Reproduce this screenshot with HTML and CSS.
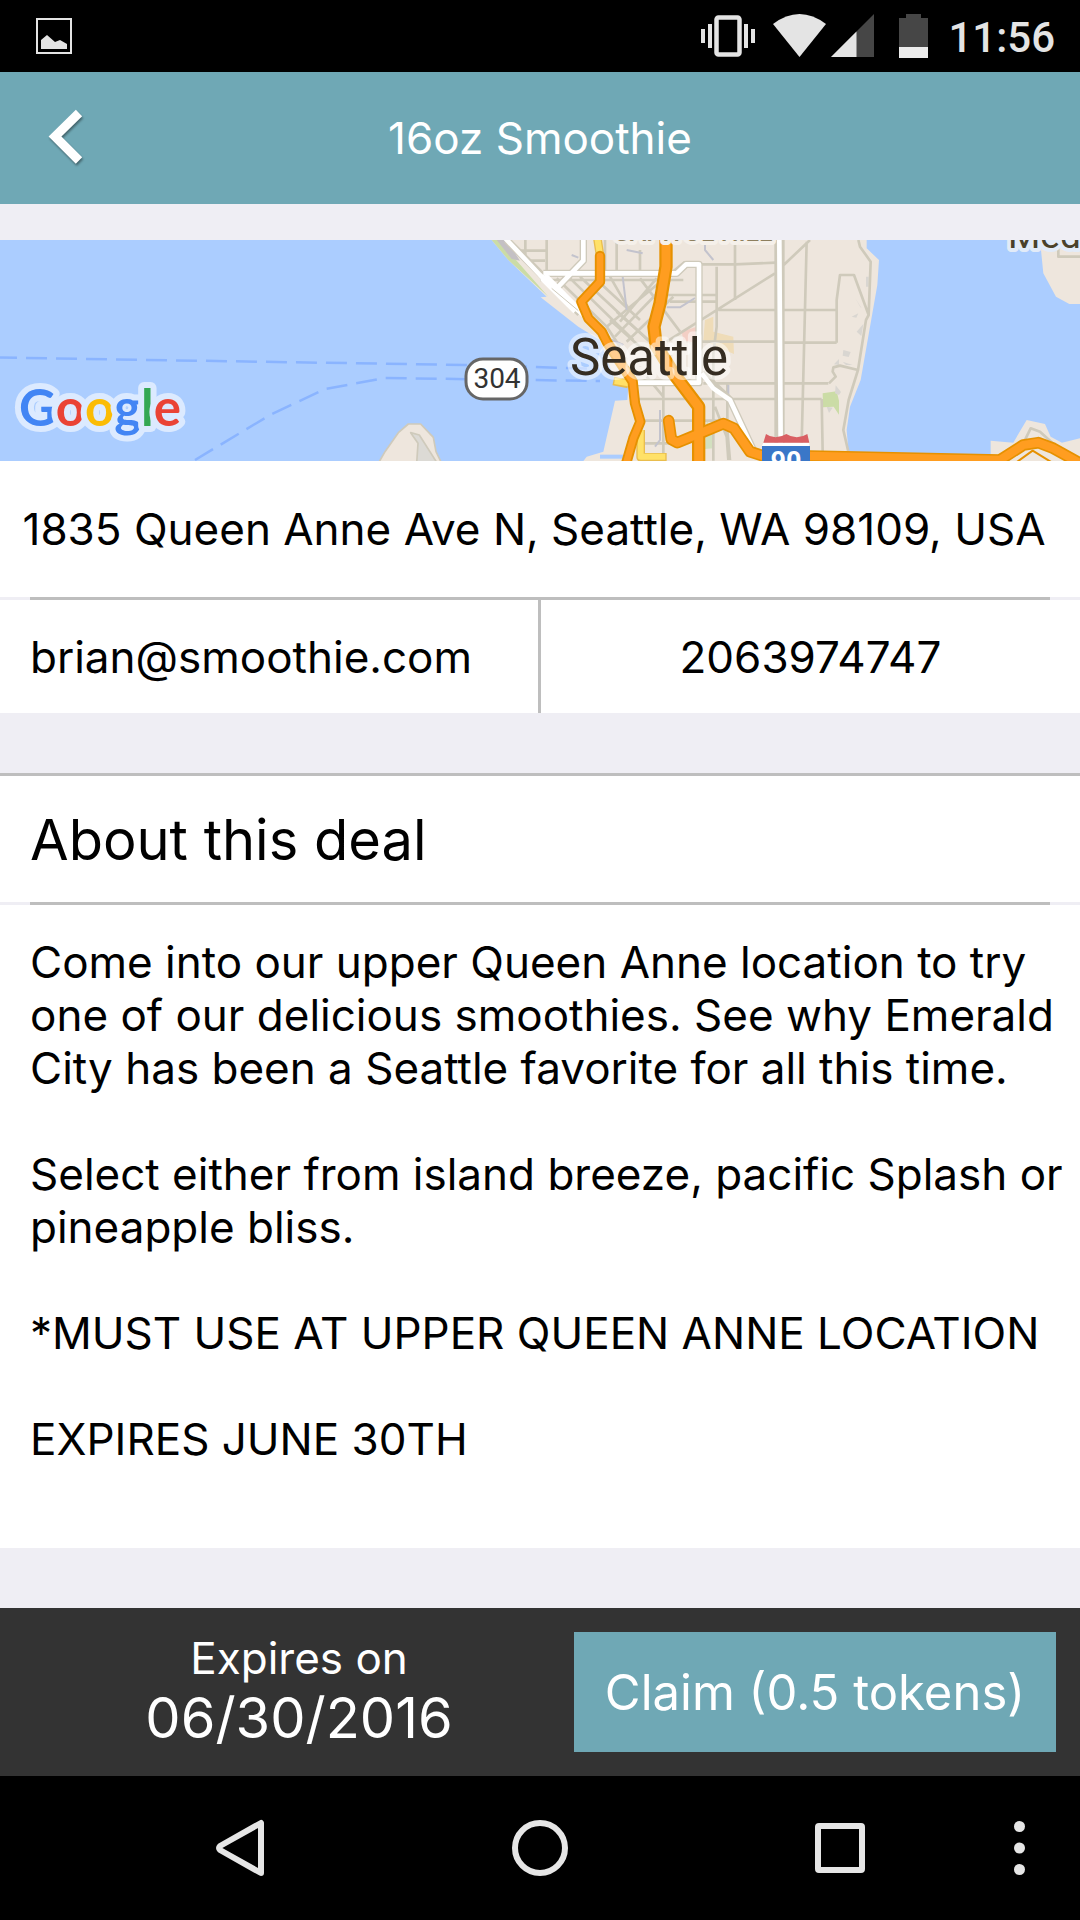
FILE: index.html
```html
<!DOCTYPE html>
<html lang="en">
<head>
<meta charset="utf-8">
<meta name="viewport" content="width=device-width, initial-scale=1">
<title>16oz Smoothie</title>
<link rel="stylesheet" href="styles.css">
</head>
<body>
<div class="screen">
  <div class="status">
    <svg class="status-note" width="36" height="36" viewBox="0 0 36 36" aria-hidden="true">
      <rect x="1" y="1" width="34" height="34" fill="none" stroke="#e4e4e4" stroke-width="2"/>
      <path d="M5 31V22l6-5 8 7 5-2 7 4v5z" fill="#e4e4e4"/>
    </svg>
    <div class="status-icons">
      <svg width="54" height="44" viewBox="0 0 54 44" fill="#e4e4e4" aria-hidden="true">
        <rect x="15.500" y="3.500" width="23" height="37" rx="2" fill="none" stroke="#e4e4e4" stroke-width="4.500"/>
        <path d="M0 15h4v14H0zM7 10h4v24H7zM43 10h4v24h-4zM50 15h4v14h-4z"/>
      </svg>
      <svg class="wifi" width="53" height="44" viewBox="0 0 53 44" aria-hidden="true">
        <path d="M0 10Q26.500-10 53 10L26.500 43z" fill="#e4e4e4"/>
      </svg>
      <svg class="signal" width="43" height="44" viewBox="0 0 43 44" aria-hidden="true">
        <path d="M0 43L43 0v43z" fill="#464646"/>
        <path d="M0 43L25.500 17.500V43z" fill="#e4e4e4"/>
      </svg>
      <svg class="battery" width="29" height="44" viewBox="0 0 29 44" aria-hidden="true">
        <path d="M0 4h7V0h15v4h7v30H0z" fill="#464646"/>
        <path d="M0 33h29v11H0z" fill="#ececec"/>
      </svg>
      <time class="clock">11:56</time>
    </div>
  </div>

  <header class="bar">
    <button class="bar-back" type="button" aria-label="Back">
      <svg width="60" height="72" viewBox="0 0 60 72" aria-hidden="true">
        <path d="M43 11L19 34.500l24 24" fill="none" stroke="#fff" stroke-width="9"/>
      </svg>
    </button>
    <h1 class="bar-title">16oz Smoothie</h1>
  </header>

  <main class="content">
    <section class="card">
      <svg class="map" viewBox="0 0 1080 221" preserveAspectRatio="xMidYMid slice" role="img" aria-label="Map of Seattle">
        <rect width="1080" height="221" fill="#abcdff"/>
        <g fill="none" stroke="#8ab4ff" stroke-width="2.500">
          <path d="M-4 117.500L465 125 600 129" stroke-dasharray="21 9"/>
          <path d="M195 220L270 175 325 149 385 138 600 141" stroke-dasharray="21 9"/>
        </g>
        <g transform="translate(440 -10) scale(.33333)" stroke-linejoin="round">
          <!-- land -->
          <g fill="#eee6dd">
            <path d="M155 30L205 90 320 200 302 202 415 290 480 330 520 440 565 470 562 510 525 512 490 665 440 680 425 700H1228L1220 600 1230 530 1262 450 1312 165 1317 90 1280 55V30z"/>
            <path d="M1800 30L1810 130 1848 200 1888 222H1930V30zM1652 700V632L1720 638 1760 570 1815 582 1832 620 1866 638 1930 622V700z"/>
            <path d="M-185 700L-165 665-125 608-95 582H-58L-20 622-12 665 5 700z" stroke="#cfcabb" stroke-width="5"/>
            <path d="M-70 700L-66 640-88 608-62 615-8 700" fill="#dcdad5" stroke="#cfcabb" stroke-width="5"/>
          </g>
          <path d="M155 30L205 90 325 200 215 75 180 30z" fill="#cbdca6"/>
          <path d="M170 30h30l40 62-25-5z" fill="#c4c0c4"/>
          <path d="M820 260V305L880 320 882 372 830 350 790 330 795 270z" fill="#efdcb8"/>
          <path d="M725 305l45-15v50l-40-10z" fill="#f3cfc5"/>
          <path d="M800 570l20 40v45l-25 2z" fill="#d2e0bf"/>
          <path d="M1148 490l42-6 7 28v42l-16-24-32 2z" fill="#cbdca6"/>
          <path d="M480 674h70v12h-70z" fill="#abcdff"/>
          <path d="M1278 140h8v30h-8zM1245 203l20 32-4-4zM1235 260l20-10-6 13zM1250 305l20-23-6 36zM1210 360l22 6-6 15-18-4zM1182 403l15-16v18zM1208 395l30 10-20 0zM1187 466l16 20-6 9-12-5zM1160 530l18 3-11 16z" fill="#d9d6d1"/>
          <!-- minor streets -->
          <g fill="none" stroke="#cfcabb" stroke-width="8">
            <path d="M256 30v62M320 30v100M240 62h82M495 30v100M530 30v90M600 60v75M885 30v180M250 92h65"/>
            <path d="M300 150h430M350 145L500 290 540 350M385 140L580 330M420 140L640 345M465 145L600 270M510 140L565 235"/>
            <path d="M735 95L565 235 500 290M650 145L540 275M690 150L525 320M700 200L560 335M600 145L720 305M510 270L600 350M530 245L625 330"/>
            <path d="M780 103H885L1007 98M680 195H830M690 215H830M830 110V290L820 370V692M680 335L1005 130M780 335H1005M835 240H1190M1190 338H1030M790 460H1165M590 507H1145M670 460V692M595 572H860M610 640H700M620 440L670 500M862 460V600L870 690M825 530L860 620 865 690"/>
            <path d="M1007 30V640M1030 30V640M1100 35L1085 640M1028 108L1110 30M1190 338V210L1200 135H1242L1286 255M1255 30L1260 50 1292 95 1286 255 1278 270 1254 420 1226 510 1210 600 1225 665M1254 420L1200 407 1180 412 1178 425 1187 440 1167 460M1145 507L1148 665M1855 30V80H1930M1750 640L1772 595 1800 605 1850 650"/>
          </g>
          <path d="M548 140L560 240M795 35V60L820 90M560 60l48 10M680 232h40l45-28M395 75l20 8M470 310l80 35M660 540v90l-15 20M865 465v35" fill="none" stroke="#c3c3cd" stroke-width="6"/>
          <!-- main roads -->
          <g fill="none" stroke="#cfcabb" stroke-width="22">
            <path d="M200 30L300 130 420 250M310 130H710L738 103H777V458H590M430 30V92L350 175M1018 30L1020 640M785 430L870 510 940 660"/>
          </g>
          <g fill="none" stroke="#fff" stroke-width="14">
            <path d="M195 24L300 135 345 180 430 255M310 130H710L738 103H777V458H590M430 30V92L350 175M1018 30L1022 640M785 430L820 475 870 510 940 660"/>
          </g>
          <path d="M310 140L410 240" stroke="#fff" stroke-width="28"/>
          <path d="M335 175L415 242" stroke="#cfcabb" stroke-width="3"/>
          <g fill="none">
            <path d="M472 24L480 75M520 453L565 462M602 600V682H680" stroke="#e9bd4e" stroke-width="26"/>
            <path d="M472 24L480 75M524 453L565 460M602 600V680H676" stroke="#ffe168" stroke-width="18"/>
          </g>
          <!-- highways -->
          <g fill="none" stroke-linecap="round">
            <g stroke="#e69100">
              <path d="M480 78V155L424 215 445 265 485 305 500 335 578 455 585 520 601 575 580 625 557 705" stroke-width="31"/>
              <path d="M678 20V110L660 220 642 290 648 345 700 430 776 530V710" stroke-width="40"/>
              <path d="M686 572L694 628 712 638 775 612 850 581 882 595 930 665 970 678H1110L1680 690 1750 645 1795 638 1840 655 1930 705" stroke-width="35"/>
            </g>
            <g stroke="#ff9d20">
              <path d="M480 78V155L424 215 445 265 485 305 500 335 578 455 585 520 601 575 580 625 557 705" stroke-width="20"/>
              <path d="M678 20V110L660 220 642 290 648 345 700 430 776 530V710" stroke-width="27"/>
              <path d="M686 572L694 628 712 638 775 612 850 581 882 595 930 665 970 678H1110L1680 690 1750 645 1795 638 1840 655 1930 705" stroke-width="25"/>
            </g>
          </g>
          <path d="M1725 700L1778 662 1840 700z" fill="#eee6dd" stroke="#e69100" stroke-width="6"/>
          <!-- interstate shield -->
          <path d="M966 648H1110V700H966z" fill="#3a77c8"/>
          <path d="M970 638H1108V648H966z" fill="#fff"/>
          <path d="M970 638L978 612Q1005 632 1039 612 1070 632 1102 612L1108 638z" fill="#d95f63"/>
        </g>
        <rect x="466" y="119" width="61" height="40" rx="17" fill="#fff" stroke="#666" stroke-width="3"/>
        <text class="map-route" x="497" y="148">304</text>
        <text class="map-route map-route-light" x="786" y="231">90</text>
        <text class="map-district" x="693" y="1">CAPITOL HILL</text>
        <text class="map-town" x="1008" y="8">Medina</text>
        <text class="map-city" x="649" y="135">Seattle</text>
        <text class="map-logo" x="19" y="186"><tspan class="g-blue">G</tspan><tspan class="g-red">o</tspan><tspan class="g-yellow">o</tspan><tspan class="g-blue">g</tspan><tspan class="g-green">l</tspan><tspan class="g-red">e</tspan></text>
      </svg>
      <address class="address">1835 Queen Anne Ave N, Seattle, WA 98109, USA</address>
      <hr class="rule">
      <div class="contact">
        <a class="contact-mail" href="mailto:brian@smoothie.com">brian@smoothie.com</a>
        <a class="contact-phone" href="tel:2063974747">2063974747</a>
      </div>
    </section>

    <section class="card about">
      <h2 class="about-title">About this deal</h2>
      <hr class="rule">
      <div class="about-text">
        <p>Come into our upper Queen Anne location to try one of our delicious smoothies. See why Emerald City has been a Seattle favorite for all this time.</p>
        <p>Select either from island breeze, pacific Splash or pineapple bliss.</p>
        <p>*MUST USE AT UPPER QUEEN ANNE LOCATION</p>
        <p>EXPIRES JUNE 30TH</p>
      </div>
    </section>
  </main>

  <footer class="claim">
    <p class="expiry">Expires on <time class="expiry-date" datetime="2016-06-30">06/30/2016</time></p>
    <button class="claim-button" type="button">Claim (0.5 tokens)</button>
  </footer>

  <nav class="system" aria-label="System">
    <button type="button" aria-label="Back">
      <svg width="60" height="60" viewBox="0 0 60 60" aria-hidden="true">
        <path d="M51 5V55L10 32Q8 30 10 28z" fill="none" stroke="#e6e6e6" stroke-width="6" stroke-linejoin="round"/>
      </svg>
    </button>
    <button type="button" aria-label="Home">
      <svg width="60" height="60" viewBox="0 0 60 60" aria-hidden="true">
        <circle cx="30" cy="30" r="25" fill="none" stroke="#e6e6e6" stroke-width="6"/>
      </svg>
    </button>
    <button type="button" aria-label="Recent apps">
      <svg width="60" height="60" viewBox="0 0 60 60" aria-hidden="true">
        <rect x="8" y="8" width="44" height="44" rx="1" fill="none" stroke="#e6e6e6" stroke-width="6"/>
      </svg>
    </button>
    <button type="button" aria-label="More">
      <svg width="60" height="60" viewBox="0 0 60 60" fill="#e6e6e6" aria-hidden="true">
        <circle cx="29.500" cy="8.500" r="5.500"/><circle cx="29.500" cy="30" r="5.500"/><circle cx="29.500" cy="51.500" r="5.500"/>
      </svg>
    </button>
  </nav>
</div>
</body>
</html>
```
FILE: styles.css
```css
* { box-sizing: border-box; }
body {
  margin: 0;
  background: #efeef4;
  color: #000;
  font: 44px/53px Inter, "Liberation Sans", sans-serif;
}
h1, h2, p { margin: 0; font-size: inherit; font-weight: 400; }
svg { display: block; flex: none; }
a { color: inherit; text-decoration: none; }
button { border: 0; padding: 0; background: none; color: inherit; font: inherit; }

.screen { display: flex; flex-direction: column; min-height: 100vh; }

.status {
  display: flex;
  justify-content: space-between;
  align-items: center;
  height: 72px;
  padding: 0 25px 0 36px;
  background: #000;
  color: #e4e4e4;
}
.status-icons { display: flex; align-items: center; }
.wifi { margin-left: 18px; }
.signal { margin-left: 5px; }
.battery { margin-left: 25px; }
.clock { margin-left: 20px; padding-top: 3px; font: 500 42px/69px Roboto, sans-serif; }

.bar {
  display: grid;
  grid-template-columns: 132px 1fr 132px;
  align-items: center;
  height: 132px;
  background: #6fa8b5;
  color: #fff;
}
.bar-back { justify-self: center; filter: drop-shadow(1px 2px 1px rgba(0, 0, 0, .4)); }
.bar-title { text-align: center; }

.content { flex: 1; display: flex; flex-direction: column; gap: 60px; padding: 36px 0 60px; }
.map { width: 100%; height: 221px; }
.rule { height: 3px; margin: 0 30px; border: 0; background: #bebebe; }
.address {
  padding: 42px 28px 41px 16px;
  background: #fff;
  font-style: normal;
  text-align: center;
}
.contact { display: grid; grid-template-columns: 541fr 539fr; background: #fff; }
.contact a { padding: 31px 30px 29px; }
.contact-mail { border-right: 3px solid #bebebe; }
.contact-phone { text-align: center; }

.about { flex: 1; display: flex; flex-direction: column; border-top: 3px solid #bebebe; }
.about-title { padding: 31px 30px 29px; background: #fff; font-size: 56px; line-height: 66px; }
.about-text {
  flex: 1;
  display: flex;
  flex-direction: column;
  gap: 53px;
  padding: 31px 12px 29px 30px;
  background: #fff;
}

.claim {
  display: grid;
  grid-template-columns: 550fr 482fr;
  padding: 24px;
  background: #333;
  color: #fff;
}
.expiry { text-align: center; }
.expiry-date { display: block; font-size: 56px; line-height: 67px; }
.claim-button { background: #6fa8b5; font-size: 49px; }

.system {
  display: grid;
  grid-template-columns: 1fr 1fr 1fr 60px;
  align-items: center;
  justify-items: center;
  height: 144px;
  padding: 0 30px 0 90px;
  background: #000;
}

.map text { font-family: Roboto, sans-serif; paint-order: stroke; stroke-linejoin: round; }
.map-route { font-size: 28px; text-anchor: middle; fill: #333; }
.map .map-route-light { font-size: 27px; font-weight: 700; fill: #fff; }
.map-district { font-size: 25px; font-weight: 500; text-anchor: middle; fill: #8d7f5e; stroke: #f5f0ea; stroke-width: 8px; }
.map-town { font-size: 37px; fill: #4a412a; stroke: #e2ebf8; stroke-width: 8px; }
.map-city { font-size: 51px; text-anchor: middle; fill: #352d22; stroke: rgba(255, 255, 255, .5); stroke-width: 9px; }
.map .map-logo { font-family: Lato, sans-serif; font-size: 51px; font-weight: 700; stroke: #dceaff; stroke-width: 12px; }
.g-blue { fill: #4285f4; }
.g-red { fill: #ea4335; }
.g-yellow { fill: #fbbc05; }
.g-green { fill: #34a853; }
```
